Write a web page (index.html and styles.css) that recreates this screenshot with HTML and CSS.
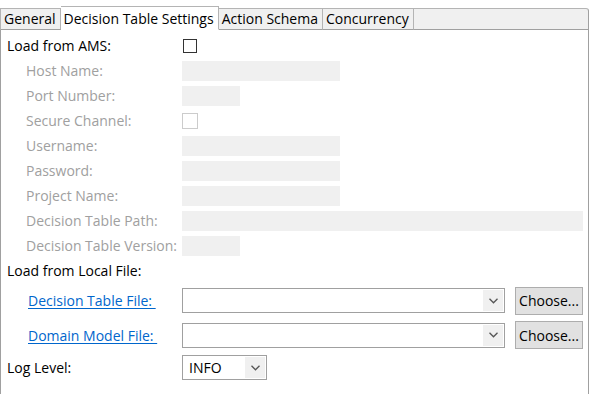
FILE: index.html
```html
<!DOCTYPE html>
<html lang="en">
<head>
    <meta charset="UTF-8">
    <title>Decision Table Settings</title>
    <link rel="stylesheet" href="styles.css">
</head>
<body>
    <div class="tabs">
        <div class="tab">General</div>
        <div class="tab active">Decision Table Settings</div>
        <div class="tab">Action Schema</div>
        <div class="tab">Concurrency</div>
        <div class="tab-fill"></div>
    </div>
    <div class="painel">
        <div class="linha r-top">
            <span class="rotulo">Load from AMS:</span>
            <span class="check"></span>
        </div>
        <div class="linha">
            <span class="rotulo sub">Host Name:</span>
            <span class="campo medio"></span>
        </div>
        <div class="linha">
            <span class="rotulo sub">Port Number:</span>
            <span class="campo curto"></span>
        </div>
        <div class="linha">
            <span class="rotulo sub">Secure Channel:</span>
            <span class="check off"></span>
        </div>
        <div class="linha">
            <span class="rotulo sub">Username:</span>
            <span class="campo medio"></span>
        </div>
        <div class="linha">
            <span class="rotulo sub">Password:</span>
            <span class="campo medio"></span>
        </div>
        <div class="linha">
            <span class="rotulo sub">Project Name:</span>
            <span class="campo medio"></span>
        </div>
        <div class="linha">
            <span class="rotulo sub">Decision Table Path:</span>
            <span class="campo longo"></span>
        </div>
        <div class="linha">
            <span class="rotulo sub">Decision Table Version:</span>
            <span class="campo curto"></span>
        </div>
        <div class="linha">
            <span class="rotulo">Load from Local File:</span>
        </div>
        <div class="linha r-arq1">
            <span class="rotulo link-cel"><a class="link" href="#">Decision Table File:&nbsp;</a></span>
            <span class="combo">
                <span class="seta"><svg width="9" height="6" viewBox="0 0 9 6"><polyline points="0.5,0.8 4.5,4.8 8.5,0.8" fill="none" stroke="#555" stroke-width="1.3"/></svg></span>
            </span>
            <button class="botao">Choose...</button>
        </div>
        <div class="linha r-arq2">
            <span class="rotulo link-cel"><a class="link" href="#">Domain Model File:&nbsp;</a></span>
            <span class="combo">
                <span class="seta"><svg width="9" height="6" viewBox="0 0 9 6"><polyline points="0.5,0.8 4.5,4.8 8.5,0.8" fill="none" stroke="#555" stroke-width="1.3"/></svg></span>
            </span>
            <button class="botao">Choose...</button>
        </div>
        <div class="linha r-log">
            <span class="rotulo">Log Level:</span>
            <span class="combo nivel">
                <span class="valor">INFO</span>
                <span class="seta"><svg width="9" height="6" viewBox="0 0 9 6"><polyline points="0.5,0.8 4.5,4.8 8.5,0.8" fill="none" stroke="#555" stroke-width="1.3"/></svg></span>
            </span>
        </div>
    </div>
</body>
</html>
```
FILE: styles.css
```css
body, html{
    margin: 0;
    padding: 0;
    background-color: white;
    font-family: "Open Sans", "Noto Sans", sans-serif;
    font-size: 14px;
    color: #000;
}
.tabs{
    display: flex;
    margin-top: 8px;
    width: 589px;
    height: 22px;
}
.tab{
    height: 22px;
    box-sizing: border-box;
    padding: 0 4px 0 3px;
    line-height: 20px;
    background-color: #f0f0f0;
    border-top: 1px solid #b4b4b4;
    border-right: 1px solid #b4b4b4;
    border-bottom: 1px solid #a0a0a0;
    white-space: nowrap;
}
.tab:first-child{
    border-left: 1px solid #b4b4b4;
}
.tab.active{
    background-color: white;
    border-bottom-color: white;
    margin-top: -2px;
    height: 24px;
    line-height: 23px;
}
.tab-fill{
    flex: 1;
    background-color: #f0f0f0;
    border-top: 1px solid #b4b4b4;
    border-right: 1px solid #a0a0a0;
    border-bottom: 1px solid #a0a0a0;
    border-top-right-radius: 3px;
}
.painel{
    width: 589px;
    height: 364px;
    box-sizing: border-box;
    border-left: 1px solid #a0a0a0;
    border-right: 1px solid #a0a0a0;
    padding: 3px 5px 0 6px;
}
.linha{
    display: flex;
    align-items: center;
    height: 25px;
}
.rotulo{
    width: 175px;
    flex-shrink: 0;
    white-space: nowrap;
}
.sub{
    padding-left: 19px;
    box-sizing: border-box;
    color: #a0a0a0;
}
.link-cel{
    padding-left: 21px;
    box-sizing: border-box;
}
.link{
    color: #0066cc;
    text-decoration: underline;
    text-underline-offset: 2px;
}
.check{
    width: 14px;
    height: 14px;
    box-sizing: border-box;
    border: 1px solid #333;
    margin-left: 1px;
}
.check.off{
    border-color: #cccccc;
    width: 16px;
    height: 16px;
    margin-left: 0;
}
.campo{
    height: 20px;
    background-color: #f0f0f0;
    margin-top: 1px;
}
.campo.medio{ width: 158px; }
.campo.curto{ width: 58px; }
.campo.longo{ width: 402px; }
.r-arq1{ height: 35px; }
.r-arq2{ height: 34px; }
.r-log{ height: 31px; }
.combo{
    display: flex;
    align-items: center;
    justify-content: flex-end;
    width: 323px;
    height: 25px;
    box-sizing: border-box;
    border: 1px solid #a0a0a0;
    padding: 1px;
    background-color: white;
}
.seta{
    width: 20px;
    height: 21px;
    background-color: #f0f0f0;
    display: flex;
    align-items: center;
    justify-content: center;
}
.botao{
    margin-left: 10px;
    width: 68px;
    height: 28px;
    background-color: #e1e1e1;
    border: 1px solid #adadad;
    font-family: inherit;
    font-size: 14px;
    padding: 0;
    color: #000;
}
.combo.nivel{
    width: 85px;
    justify-content: space-between;
}
.valor{
    padding-left: 5px;
}
```
